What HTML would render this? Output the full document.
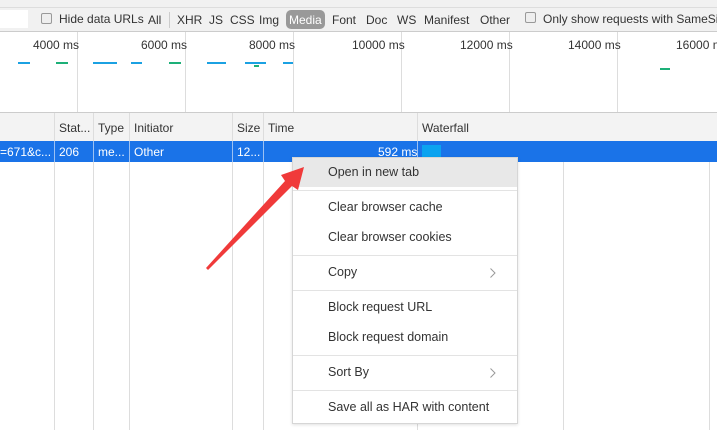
<!DOCTYPE html><html><head><style>
body{margin:0;width:717px;height:430px;overflow:hidden;background:#fff;font-family:"Liberation Sans","Noto Sans CJK SC",sans-serif;font-size:12px;color:#333;position:relative}
.a{position:absolute}
.v{position:absolute;width:1px;background:#ddd}
.t{position:absolute;white-space:nowrap}
.mi{position:absolute;left:35px;font-size:12.5px;color:#333}
.sep{position:absolute;left:0;right:0;height:1px;background:#e3e3e3}
</style></head><body>
<div class="a" style="left:0;top:0;width:717px;height:7px;background:#f1f1f1;border-bottom:1px solid #ddd"></div>
<div class="a" style="left:0;top:8px;width:717px;height:23px;background:#f1f1f1;border-bottom:1px solid #ccc"></div>
<div class="a" style="left:0;top:10px;width:28px;height:18px;background:#fff"></div>
<div class="a" style="left:41px;top:13px;width:9px;height:9px;border:1px solid #999;border-radius:2px;background:#eee"></div>
<div class="t" style="left:59px;top:12px">Hide data URLs</div>
<div class="t" style="left:148px;top:13px">All</div>
<div class="v" style="left:169px;top:12px;height:16px;background:#ccc"></div>
<div class="t" style="left:177px;top:13px">XHR</div>
<div class="t" style="left:209px;top:13px">JS</div>
<div class="t" style="left:230px;top:13px">CSS</div>
<div class="t" style="left:259px;top:13px">Img</div>
<div class="a" style="left:286px;top:10px;width:39px;height:19px;background:#999;border-radius:5px"></div>
<div class="t" style="left:289px;top:13px;color:#fff">Media</div>
<div class="t" style="left:332px;top:13px">Font</div>
<div class="t" style="left:366px;top:13px">Doc</div>
<div class="t" style="left:397px;top:13px">WS</div>
<div class="t" style="left:424px;top:13px">Manifest</div>
<div class="t" style="left:480px;top:13px">Other</div>
<div class="a" style="left:525px;top:12px;width:9px;height:9px;border:1px solid #999;border-radius:2px;background:#eee"></div>
<div class="t" style="left:543px;top:12px">Only show requests with SameSite</div>
<div class="v" style="left:77px;top:32px;height:80px"></div>
<div class="v" style="left:185px;top:32px;height:80px"></div>
<div class="v" style="left:293px;top:32px;height:80px"></div>
<div class="v" style="left:401px;top:32px;height:80px"></div>
<div class="v" style="left:509px;top:32px;height:80px"></div>
<div class="v" style="left:617px;top:32px;height:80px"></div>
<div class="t" style="left:33px;top:38px">4000 ms</div>
<div class="t" style="left:141px;top:38px">6000 ms</div>
<div class="t" style="left:249px;top:38px">8000 ms</div>
<div class="t" style="left:352px;top:38px">10000 ms</div>
<div class="t" style="left:460px;top:38px">12000 ms</div>
<div class="t" style="left:568px;top:38px">14000 ms</div>
<div class="t" style="left:676px;top:38px">16000 ms</div>
<div class="a" style="left:18px;top:62px;width:12px;height:2px;background:#1ba1e2"></div>
<div class="a" style="left:56px;top:62px;width:12px;height:2px;background:#1db078"></div>
<div class="a" style="left:93px;top:62px;width:24px;height:2px;background:#1ba1e2"></div>
<div class="a" style="left:131px;top:62px;width:11px;height:2px;background:#1ba1e2"></div>
<div class="a" style="left:169px;top:62px;width:12px;height:2px;background:#1db078"></div>
<div class="a" style="left:207px;top:62px;width:19px;height:2px;background:#1ba1e2"></div>
<div class="a" style="left:245px;top:62px;width:21px;height:2px;background:#1ba1e2"></div>
<div class="a" style="left:254px;top:65px;width:5px;height:2px;background:#1db078"></div>
<div class="a" style="left:283px;top:62px;width:10px;height:2px;background:#1ba1e2"></div>
<div class="a" style="left:660px;top:68px;width:10px;height:2px;background:#1db078"></div>
<div class="a" style="left:0;top:112px;width:717px;height:28px;background:#f3f3f3;border-top:1px solid #ccc;border-bottom:1px solid #ddd"></div>
<div class="v" style="left:54px;top:113px;height:317px"></div>
<div class="v" style="left:93px;top:113px;height:317px"></div>
<div class="v" style="left:129px;top:113px;height:317px"></div>
<div class="v" style="left:232px;top:113px;height:317px"></div>
<div class="v" style="left:263px;top:113px;height:317px"></div>
<div class="v" style="left:417px;top:113px;height:317px"></div>
<div class="v" style="left:563px;top:141px;height:289px"></div>
<div class="v" style="left:709px;top:141px;height:289px"></div>
<div class="t" style="left:59px;top:121px">Stat...</div>
<div class="t" style="left:98px;top:121px">Type</div>
<div class="t" style="left:134px;top:121px">Initiator</div>
<div class="t" style="left:237px;top:121px">Size</div>
<div class="t" style="left:268px;top:121px">Time</div>
<div class="t" style="left:422px;top:121px">Waterfall</div>
<div class="a" style="left:0;top:141px;width:717px;height:21px;background:#1a73e8"></div>
<div class="a" style="left:54px;top:141px;width:1px;height:21px;background:#9cc1f3"></div>
<div class="a" style="left:93px;top:141px;width:1px;height:21px;background:#9cc1f3"></div>
<div class="a" style="left:129px;top:141px;width:1px;height:21px;background:#9cc1f3"></div>
<div class="a" style="left:232px;top:141px;width:1px;height:21px;background:#9cc1f3"></div>
<div class="a" style="left:263px;top:141px;width:1px;height:21px;background:#9cc1f3"></div>
<div class="a" style="left:417px;top:141px;width:1px;height:21px;background:#9cc1f3"></div>
<div class="a" style="left:422px;top:145px;width:19px;height:13px;background:#0ba3f0"></div>
<div class="t" style="left:0;top:145px;color:#fff">=671&amp;c...</div>
<div class="t" style="left:59px;top:145px;color:#fff">206</div>
<div class="t" style="left:98px;top:145px;color:#fff">me...</div>
<div class="t" style="left:134px;top:145px;color:#fff">Other</div>
<div class="t" style="left:237px;top:145px;color:#fff">12...</div>
<div class="t" style="left:378px;top:145px;color:#fff">592 ms</div>
<div class="a" style="left:292px;top:157px;width:224px;height:265px;background:#fff;border:1px solid #d6d6d6;box-shadow:0 1px 3px rgba(0,0,0,.12)">
<div class="a" style="left:0;top:0;width:224px;height:29px;background:#e8e8e8"></div>
<div class="mi" style="top:7px">Open in new tab</div>
<div class="sep" style="top:32px"></div>
<div class="mi" style="top:42px">Clear browser cache</div>
<div class="mi" style="top:72px">Clear browser cookies</div>
<div class="sep" style="top:97px"></div>
<div class="mi" style="top:107px">Copy</div>
<svg class="a" style="left:196px;top:109px" width="8" height="12"><path d="M1.5 1.5 L6 6 L1.5 10.5" fill="none" stroke="#999" stroke-width="1"/></svg>
<div class="sep" style="top:132px"></div>
<div class="mi" style="top:142px">Block request URL</div>
<div class="mi" style="top:172px">Block request domain</div>
<div class="sep" style="top:197px"></div>
<div class="mi" style="top:207px">Sort By</div>
<svg class="a" style="left:196px;top:209px" width="8" height="12"><path d="M1.5 1.5 L6 6 L1.5 10.5" fill="none" stroke="#999" stroke-width="1"/></svg>
<div class="sep" style="top:232px"></div>
<div class="mi" style="top:242px">Save all as HAR with content</div>
</div>
<svg class="a" style="left:0;top:0" width="717" height="430"><polygon points="206,268 285,181 281,175 304,167 298,190 292,186 208,270" fill="#f03a3a"/></svg>
</body></html>
